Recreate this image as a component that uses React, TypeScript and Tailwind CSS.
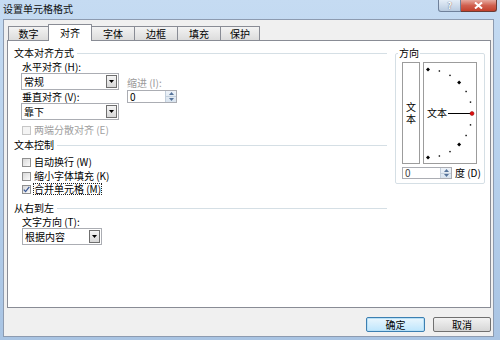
import React from 'react';

const tabs = [
  { label: '数字', w: 'w-[41px]' },
  { label: '对齐', w: 'w-[44px]', active: true },
  { label: '字体', w: 'w-[44px]' },
  { label: '边框', w: 'w-[44px]' },
  { label: '填充', w: 'w-[44px]' },
  { label: '保护', w: 'w-[40px]' },
];

function Arrow() {
  return (
    <svg width="5" height="3" viewBox="0 0 5 3">
      <path d="M0 0H5L2.5 3Z" fill="#000" />
    </svg>
  );
}

function Select({ w, text }: { w: string; text: string }) {
  return (
    <div className={`${w} h-[17px] border border-[#abadb3] bg-white flex items-center`}>
      <span className="flex-1 pl-[2px] leading-[12px]">{text}</span>
      <span className="w-[11px] h-[13px] mr-px border border-[#6f6f6f] bg-gradient-to-b from-[#f5f5f5] to-[#d8d8d8] flex items-center justify-center">
        <Arrow />
      </span>
    </div>
  );
}

function Spin({ w, h, muted }: { w: string; h: string; muted?: boolean }) {
  return (
    <div className={`${w} ${h} border border-[#abadb3] bg-white flex items-center`}>
      <span className={`flex-1 pl-[2px] leading-none ${muted ? 'text-[#444]' : ''}`}>0</span>
      <span className="w-[11px] h-full flex flex-col border-l border-[#c3cfdc] bg-gradient-to-b from-[#eef3f9] to-[#d9e4ef]">
        <span className="flex-1 flex items-center justify-center">
          <svg width="5" height="3" viewBox="0 0 5 3"><path d="M0 3H5L2.5 0Z" fill="#55739a" /></svg>
        </span>
        <span className="h-px bg-[#c3cfdc]" />
        <span className="flex-1 flex items-center justify-center">
          <svg width="5" height="3" viewBox="0 0 5 3"><path d="M0 0H5L2.5 3Z" fill="#55739a" /></svg>
        </span>
      </span>
    </div>
  );
}

function Check({ label, checked, disabled, focused, className }: { label: string; checked?: boolean; disabled?: boolean; focused?: boolean; className: string }) {
  return (
    <div className={`flex items-center h-[12px] pl-[8px] ${className}`}>
      <span
        className={`w-[9px] h-[9px] border flex items-center justify-center ${
          disabled ? 'border-[#c6c6c6] bg-[#f4f4f4]' : 'border-[#8f8f8f] bg-gradient-to-br from-[#d9d9d9] to-[#fbfbfb]'
        }`}
      >
        {checked && (
          <svg width="7" height="7" viewBox="0 0 7 7">
            <path d="M0.8 3.6L2.6 5.6L6.3 0.8" stroke="#3b5a98" strokeWidth="1.3" fill="none" />
          </svg>
        )}
      </span>
      <span
        className={`ml-[2px] px-[1px] leading-[12px] ${focused ? 'outline outline-1 outline-dotted outline-[#222] -outline-offset-1' : ''} ${
          disabled ? 'text-[#a0a0a0]' : ''
        }`}
      >
        {label}
      </span>
    </div>
  );
}

function Heading({ text, className }: { text: string; className: string }) {
  return (
    <div className={`flex items-center h-[12px] leading-[12px] ${className}`}>
      <span>{text}</span>
      <span className="flex-1 h-px bg-[#d5dfe5] ml-[3px]" />
    </div>
  );
}

const angles = [90, 75, 60, 45, 30, 15, 0, -15, -30, -45, -60, -75, -90];

function Dial() {
  return (
    <div className="relative w-[54px] h-[102px] border border-[#9c9c9c] flex items-center">
      <svg className="absolute inset-0" width="52" height="100" viewBox="0 0 52 100">
        <line x1="24" y1="50.5" x2="47" y2="50.5" stroke="#000" strokeWidth="1" />
        {angles.map(a => {
          const r = (a * Math.PI) / 180;
          const x = 4 + 44 * Math.cos(r);
          const y = 50.5 - 44 * Math.sin(r);
          if (a === 0) return <circle key={a} cx={x} cy={y} r="2" fill="#e01010" stroke="#8a0000" strokeWidth="0.5" />;
          const big = a % 45 === 0;
          return big ? (
            <path key={a} d={`M${x} ${y - 2}L${x + 2} ${y}L${x} ${y + 2}L${x - 2} ${y}Z`} fill="#000" />
          ) : (
            <rect key={a} x={x - 0.7} y={y - 0.7} width="1.4" height="1.4" fill="#000" />
          );
        })}
      </svg>
      <span className="relative pl-[3px] leading-[12px]">文本</span>
    </div>
  );
}

export default function App() {
  return (
    <div className="w-[500px] h-[340px] overflow-hidden flex flex-col bg-gradient-to-b from-[#c5dbf2] via-[#b6d0ec] to-[#a9c4e3] font-['Noto_Sans_CJK_SC',sans-serif] text-[10px] text-black">
      {/* title bar */}
      <div className="h-[19px] flex">
        <span className="pl-[3px] pt-[3px] leading-[12px] text-[#111]">设置单元格格式</span>
        <div className="ml-auto mr-[3px] flex self-start">
          <span className="w-[23px] h-[12px] border border-t-0 border-[#6f819b] rounded-bl-[3px] bg-gradient-to-b from-[#e4edf7] to-[#b9cbe0] flex items-center justify-center text-white font-bold text-[9px] leading-[11px] [text-shadow:0_0_1px_#334]">
            ?
          </span>
          <span className="w-[36px] h-[12px] border border-t-0 border-l-0 border-[#6b3b34] rounded-br-[3px] bg-gradient-to-b from-[#e5a99f] via-[#d0604f] to-[#c2402b] flex items-center justify-center">
            <svg width="9" height="7" viewBox="0 0 9 7">
              <path d="M1 0.5L8 6.5M8 0.5L1 6.5" stroke="#fff" strokeWidth="2" />
            </svg>
          </span>
        </div>
      </div>

      {/* dialog body */}
      <div className="flex-1 ml-[3px] mr-[6px] mb-[3px] bg-[#f0f0f0] border border-[#8d9bb0] flex flex-col pt-[4px] pl-[3px] pr-[2px]">
        <div className="flex items-end ml-px h-[16px]">
          {tabs.map((t, i) => (
            <div
              key={t.label}
              className={`${t.w} ${i > 0 ? '-ml-px' : ''} border border-b-0 border-[#898c95] flex items-center justify-center leading-[12px] ${
                t.active ? 'h-[17px] -mb-px bg-white relative z-10 rounded-t-[1px]' : 'h-[14px] bg-gradient-to-b from-[#f3f3f3] to-[#dcdcdc]'
              }`}
            >
              {t.label}
            </div>
          ))}
        </div>

        <div className="h-[268px] bg-white border border-[#898c95] flex pt-[6px] pl-[6px]">
          {/* left column */}
          <div className="flex-1 flex flex-col">
            <Heading text="文本对齐方式" className="" />
            <div className="mt-[2px] h-[12px] leading-[12px] pl-[8px]">水平对齐 (H):</div>
            <div className="flex pl-[7px]">
              <div className="flex flex-col">
                <Select w="w-[98px]" text="常规" />
                <div className="mt-px h-[12px] leading-[12px] pl-px">垂直对齐 (V):</div>
                <Select w="w-[98px]" text="靠下" />
              </div>
              <div className="ml-[8px] flex flex-col">
                <div className="mt-[4px] h-[12px] leading-[12px] text-[#9a9a9a]">缩进 (I):</div>
                <div className="mt-px">
                  <Spin w="w-[50px]" h="h-[13px]" />
                </div>
              </div>
            </div>
            <Check label="两端分散对齐 (E)" disabled className="mt-[4px]" />
            <Heading text="文本控制" className="mt-[3px]" />
            <Check label="自动换行 (W)" className="mt-[5px]" />
            <Check label="缩小字体填充 (K)" className="mt-[2px]" />
            <Check label="合并单元格 (M)" checked focused className="mt-px" />
            <Heading text="从右到左" className="mt-[7px]" />
            <div className="mt-[2px] h-[12px] leading-[12px] pl-[8px]">文字方向 (T):</div>
            <div className="pl-[8px]">
              <Select w="w-[80px]" text="根据内容" />
            </div>
          </div>

          {/* direction group */}
          <fieldset className="ml-[8px] mr-[5px] w-[90px] self-start border border-[#d5dfe5] rounded-[2px] pb-[4px]">
            <legend className="ml-[2px] px-px leading-[12px]">方向</legend>
            <div className="pt-[3px] pl-[6px] flex flex-col">
              <div className="flex gap-[3px]">
                <div className="w-[18px] h-[102px] border border-[#9c9c9c] flex flex-col items-center justify-center">
                  <span className="h-[12px] leading-[12px]">文</span>
                  <span className="h-[12px] leading-[12px]">本</span>
                </div>
                <Dial />
              </div>
              <div className="mt-[3px] flex items-center">
                <Spin w="w-[50px]" h="h-[12px]" muted />
                <span className="ml-[3px] leading-[12px]">度 (D)</span>
              </div>
            </div>
          </fieldset>
        </div>

        <div className="mt-[9px] flex justify-end gap-[8px]">
          <button className="w-[59px] h-[15px] border border-[#3c7fb1] rounded-[2px] bg-gradient-to-b from-[#eaf6fd] to-[#bee6fd] shadow-[inset_0_0_0_1px_#b8e0f6] leading-[12px]">
            确定
          </button>
          <button className="w-[58px] h-[15px] border border-[#707070] rounded-[2px] bg-gradient-to-b from-[#f2f2f2] to-[#d6d6d6] leading-[12px]">
            取消
          </button>
        </div>
      </div>
    </div>
  );
}
